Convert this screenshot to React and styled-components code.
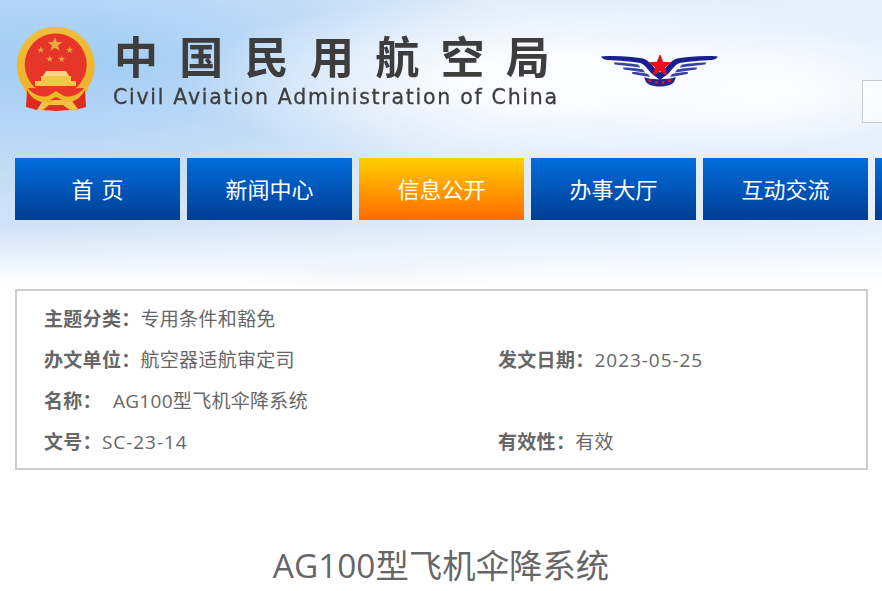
import React from 'react'
import styled, { createGlobalStyle } from 'styled-components'

const NAV_ITEMS = ['首 页', '新闻中心', '信息公开', '办事大厅', '互动交流', '']

const GlobalStyle = createGlobalStyle`
  html, body {
    margin: 0;
    padding: 0;
    background: #fff;
    overflow: hidden;
  }
  body {
    font-family: "Open Sans", "Noto Sans CJK SC", sans-serif;
  }
`

const star = (cx, cy, r) => {
  const pts = []
  for (let i = 0; i < 10; i++) {
    const rad = i % 2 === 0 ? r : r * 0.42
    const a = (Math.PI / 5) * i - Math.PI / 2
    pts.push(`${(cx + rad * Math.cos(a)).toFixed(2)},${(cy + rad * Math.sin(a)).toFixed(2)}`)
  }
  return pts.join(' ')
}

const Emblem = () => (
  <EmblemSvg viewBox="0 0 90 90" width="90" height="90">
    <defs>
      <linearGradient id="gold" x1="0" y1="0" x2="0" y2="1">
        <stop offset="0" stopColor="#f0bf3a" />
        <stop offset="1" stopColor="#ecb025" />
      </linearGradient>
    </defs>
    <circle cx="41.7" cy="41.5" r="39" fill="url(#gold)" />
    <circle cx="41.7" cy="40.5" r="31" fill="#e8352a" />
    <polygon points={star(41, 20.5, 7.5)} fill="#e2ad3c" />
    <polygon points={star(26.7, 26, 3.6)} fill="#dba53a" />
    <polygon points={star(55.7, 26, 3.6)} fill="#dba53a" />
    <polygon points={star(35.7, 35, 3.6)} fill="#dba53a" />
    <polygon points={star(47.7, 35, 3.6)} fill="#dba53a" />
    <path d="M32 47h20l3 5h-26z" fill="#f7d889" />
    <path d="M27 52h30v5h5v5H21v-5h6z" fill="#f4c746" />
    <path d="M12 64c8 0 14 0 20 1 4-2 15-2 20 0 6-1 12-1 20-1-3 7-9 11-16 12H28c-7-1-13-5-16-12z" fill="#e8352a" />
    <path d="M12 62c6 8 14 12 22 10l8-5 8 5c8 2 16-2 22-10l2 3c-6 10-15 14-24 12l-8-4-8 4c-9 2-18-2-24-12z" fill="#efb928" />
    <path d="M13 66c4 8 10 11 15 12l-5 8-11-3z" fill="#dc2a1c" />
    <path d="M71 66c-4 8-10 11-15 12l5 8 11-3z" fill="#dc2a1c" />
    <path d="M24 85l7-8 4 2 6-3 6 0 7 3 4-2 6 8-7 2-6-5-4 2h-9l-4-2-6 5z" fill="#f2c23e" />
    <path d="M29 86l6-5 14 0 7 5-14 1z" fill="#e23022" />
  </EmblemSvg>
)

const Wings = () => (
  <WingsSvg viewBox="0 0 118 32" width="118" height="32">
    <path d="M0 1.5c15-1 30 0 42 2 4 1 8 5 12 10l5 4 5-4c4-5 8-9 12-10 12-2 27-3 41-2-1 2-3 3-6 3.500-12 .5-24 1.500-32 3-4 1-7 5-11 10l-9 7-9-7c-4-5-7-9-11-10-8-1.500-20-2.500-33-3-3-.5-5-1.500-6-3.500z" fill="#1a1f8f" />
    <path d="M13 7.500c8 0 18 1 24 2l2.500 3c-8-1-17-2-26-3z" fill="#3a41a6" />
    <path d="M22 12.500c6 0 13 .5 20 2l2 3c-7-1-14-2-21.500-3z" fill="#3a41a6" />
    <path d="M31 17c4 0 10 .5 16 2l2 3c-6-1-12-2-17.500-3z" fill="#3a41a6" />
    <path d="M105 7.500c-8 0-18 1-24 2l-2.500 3c8-1 17-2 26-3z" fill="#3a41a6" />
    <path d="M96 12.500c-6 0-13 .5-20 2l-2 3c7-1 14-2 21.500-3z" fill="#3a41a6" />
    <path d="M87 17c-4 0-10 .5-16 2l-2 3c6-1 12-2 17.500-3z" fill="#3a41a6" />
    <polygon points={star(59, 11, 12.500)} fill="#e8101c" />
    <path d="M43 22c6 3 24 3 32 0l-2 5c-2 3-8 4.500-14 4.500s-12-1.500-14-4.500z" fill="#22268f" />
    <circle cx="49" cy="25.500" r="1.600" fill="#e01030" />
    <circle cx="55.500" cy="27.500" r="1.600" fill="#e01030" />
    <circle cx="62" cy="27.500" r="1.600" fill="#e01030" />
    <circle cx="68.500" cy="25.500" r="1.600" fill="#e01030" />
  </WingsSvg>
)

export default function App() {
  return (
    <Page>
      <GlobalStyle />
      <Sky>
        <Header>
          <Emblem />
          <TitleBlock>
            <TitleCn>中国民用航空局</TitleCn>
            <TitleEn>Civil Aviation Administration of China</TitleEn>
          </TitleBlock>
          <Wings />
          <SearchBox />
        </Header>
        <Nav>
          {NAV_ITEMS.map((item, i) => (
            <NavItem key={i} $active={i === 2}>{item}</NavItem>
          ))}
        </Nav>
      </Sky>
      <InfoPanel>
        <InfoRow>
          <InfoCell>
            <Label>主题分类：</Label>专用条件和豁免
          </InfoCell>
        </InfoRow>
        <InfoRow>
          <InfoCell>
            <Label>办文单位：</Label>航空器适航审定司
          </InfoCell>
          <InfoCell>
            <Label>发文日期：</Label><Latin>2023-05-25</Latin>
          </InfoCell>
        </InfoRow>
        <InfoRow>
          <InfoCell>
            <Label>名称：</Label>
            <NameValue>AG100型飞机伞降系统</NameValue>
          </InfoCell>
        </InfoRow>
        <InfoRow>
          <InfoCell>
            <Label>文号：</Label><Latin>SC-23-14</Latin>
          </InfoCell>
          <InfoCell>
            <Label>有效性：</Label>有效
          </InfoCell>
        </InfoRow>
      </InfoPanel>
      <ArticleTitle>AG100型飞机伞降系统</ArticleTitle>
    </Page>
  )
}

const Page = styled.div`
  width: 882px;
  height: 591px;
  overflow: hidden;
  color: #666;
`
const Sky = styled.div`
  height: 289px;
  overflow: hidden;
  background:
    radial-gradient(ellipse 150px 20px at 370px 272px, rgba(232, 238, 246, 0.35), rgba(232, 238, 246, 0) 100%),
    linear-gradient(180deg, rgba(255, 255, 255, 0) 78%, #fff 98%),
    radial-gradient(ellipse 380px 90px at 560px 80px, #fbfcff 25%, rgba(251, 252, 255, 0) 100%),
    radial-gradient(ellipse 180px 60px at 760px 90px, #fafcff 20%, rgba(250, 252, 255, 0) 100%),
    radial-gradient(ellipse 460px 150px at 70px 60px, rgba(158, 203, 245, 0.95), rgba(158, 203, 245, 0) 100%),
    linear-gradient(90deg, #cfe1f6 0%, #dce9f8 45%, #e7f0fb 100%);
`
const Header = styled.header`
  display: flex;
  align-items: flex-start;
  height: 158px;
  padding: 24px 0 0 14px;
  box-sizing: border-box;
`
const EmblemSvg = styled.svg`
  flex: none;
  filter: blur(0.5px);
`
const TitleBlock = styled.div`
  flex: none;
  margin: 7px 0 0 9px;
  width: 450px;
  color: #3d3d3d;
  filter: blur(0.4px);
`
const TitleCn = styled.div`
  font-family: "Noto Sans CJK SC", sans-serif;
  font-weight: 700;
  font-size: 44px;
  line-height: 44px;
  letter-spacing: 21.3px;
  margin: 2px 0 8px 1px;
  white-space: nowrap;
`
const TitleEn = styled.div`
  font-family: "DejaVu Sans", sans-serif;
  font-size: 20.5px;
  line-height: 24px;
  letter-spacing: 1.72px;
  -webkit-text-stroke: 0.3px #3d3d3d;
  white-space: nowrap;
`
const WingsSvg = styled.svg`
  flex: none;
  margin: 31px 0 0 38px;
  filter: blur(0.4px);
`
const SearchBox = styled.div`
  flex: none;
  width: 120px;
  height: 43px;
  margin: 56px 0 0 143px;
  border: 1px solid #ccc;
  box-sizing: border-box;
  background: rgba(255, 255, 255, 0.6);
`
const Nav = styled.nav`
  display: flex;
  gap: 7px;
  padding-left: 15px;
`
const NavItem = styled.a`
  flex: none;
  display: flex;
  align-items: center;
  justify-content: center;
  width: 165px;
  height: 62px;
  padding-bottom: 3px;
  box-sizing: border-box;
  color: #fff;
  font-family: "Noto Sans CJK SC", sans-serif;
  font-size: 22px;
  word-spacing: 3px;
  white-space: pre;
  background: ${p => (p.$active
    ? 'linear-gradient(180deg, #ffcf00 0%, #ff6a00 100%)'
    : 'linear-gradient(180deg, #006ddb 0%, #003e94 100%)')};
`
const InfoPanel = styled.section`
  width: 853px;
  height: 181px;
  margin-left: 15px;
  padding: 6px 0 0 27px;
  box-sizing: border-box;
  border: 2px solid #ccc;
  background: #fff;
`
const InfoRow = styled.div`
  display: grid;
  grid-template-columns: 454px 1fr;
  height: 41.2px;
  align-items: center;
  font-size: 19px;
  letter-spacing: 0.3px;
  white-space: nowrap;
`
const InfoCell = styled.div``
const Label = styled.b`
  font-weight: 700;
`
const Latin = styled.span`
  letter-spacing: 0.95px;
`
const NameValue = styled.span`
  margin-left: 11px;
`
const ArticleTitle = styled.h1`
  margin: 70px 0 0;
  width: 882px;
  text-align: center;
  font-size: 33.4px;
  line-height: 50px;
  font-weight: 400;
  color: #666;
`
